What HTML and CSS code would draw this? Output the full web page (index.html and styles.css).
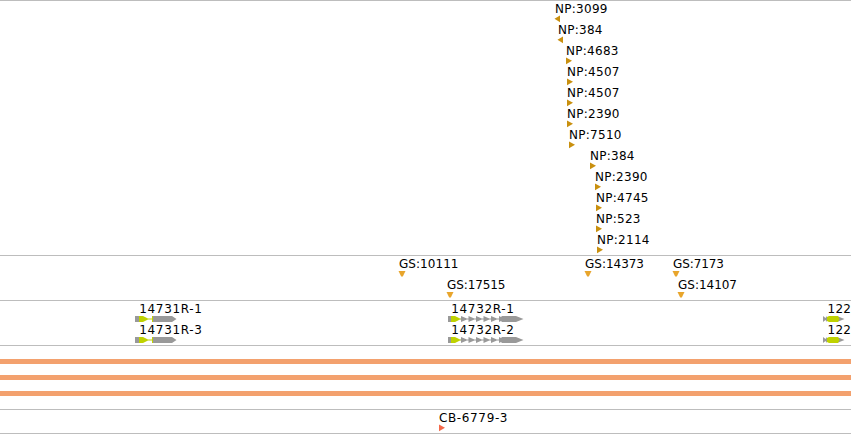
FILE: index.html
```
<!DOCTYPE html>
<html lang="en">
<head>
<meta charset="utf-8">
<title>Genome tracks</title>
<link rel="stylesheet" href="styles.css">
</head>
<body>
<main class="browser" id="browser"></main>
<script src="tracks.js"></script>
</body>
</html>
```
FILE: styles.css
```
body {
  margin: 0;
  background: #fff;
}
.browser {
  display: flex;
  flex-direction: column;
  width: 851px;
  height: 434px;
  overflow: hidden;
}
.track {
  box-sizing: border-box;
  border-top: 1px solid #bdbdbd;
}
.track svg {
  display: block;
}
.track-end {
  border-top: 1px solid #bdbdbd;
}
.label {
  font: 12px "DejaVu Sans", sans-serif;
  fill: #000;
}
.np { fill: #c9900f; }
.gs { fill: #e8a52c; }
.cb { fill: #f4694a; }
.exon { fill: #999; }
.coding { fill: #bfd200; }
.bars {
  display: flex;
  flex-direction: column;
  gap: 11px;
  height: 64px;
  padding-top: 13px;
}
.bar {
  height: 5px;
  background: #f3a16e;
}
```
FILE: tracks.js
```
const browser = document.getElementById("browser");

// Coordinates are local to each track; width fixes the drawn length of a label.
const label = (x, y, text, width) =>
  `<text class="label" x="${x}" y="${y}"${width ? ` textLength="${width}"` : ""}>${text}</text>`;
const right = (x, y, cls) => `<path class="${cls}" d="M${x} ${y - 0.5}l6 3.2-6 3.6z"/>`;
const left = (x, y, cls) => `<path class="${cls}" d="M${x + 5} ${y - 0.5}v6.7l-5.5-3.5z"/>`;
const down = (x, y, cls) => `<path class="${cls}" d="M${x - 0.5} ${y}h7l-2.7 5.5h-1.6z"/>`;

function track(height, content) {
  browser.insertAdjacentHTML("beforeend",
    `<section class="track"><svg width="851" height="${height - 1}">${content}</svg></section>`);
}

const np = [
  [555, "3099"], [558, "384"], [566, "4683"], [567, "4507"], [567, "4507"], [567, "2390"],
  [569, "7510"], [590, "384"], [595, "2390"], [596, "4745"], [596, "523"], [597, "2114"]
];
track(255, np.map(([x, id], i) =>
  label(x, 12 + i * 21, "NP:" + id, id.length === 4 ? 52.5 : 44.5) +
  (i < 2 ? left : right)(x, 15 + i * 21, "np")).join(""));

const gs = [[399, 0, "10111", 59.5], [447, 1, "17515", 58.5], [585, 0, "14373", 59],
  [673, 0, "7173", 51], [678, 1, "14107", 59]];
track(45, gs.map(([x, row, id, w]) =>
  label(x, 12 + row * 21, "GS:" + id, w) + down(x, 15 + row * 21, "gs")).join(""));

const geneA = `<path class="exon" d="M135 0h4v6h-4zM152 0h20l4.5 3-4.5 3h-20z"/>
  <path class="coding" d="M139 0h4l5 2.5h4V0h1v6h-1V3.5h-4L143 6h-4z"/>`;
const geneB = `<path class="exon" d="M448 0h3v6h-3zM460 2.5h40v1h-40zM461 0l7 3-7 3zM468.5 0l7 3-7 3zM476 0l7 3-7 3zM483.5 0l7 3-7 3zM491 0l7 3-7 3zM499 0l2 1 1-1h14l7.5 3-7.5 3h-14l-1-1-2 1z"/>
  <path class="coding" d="M451 0h4l6 3-6 3h-4z"/>`;
const geneC = `<path class="exon" d="M823 0l2.5 2L827 0v6l-1.5-2L823 6zM837 0l7.5 3-7.5 3z"/>
  <path class="coding" d="M827 1l2-1h9l1.5 3-1.5 3h-9l-2-1z"/>`;
track(45, [0, 1].map(row =>
  label(139.3, 12 + row * 21, "14731R-" + (row ? 3 : 1), 62.5) +
  label(451.3, 12 + row * 21, "14732R-" + (row + 1), 62.5) +
  label(827.5, 12 + row * 21, "122", 23.5) +
  `<g transform="translate(0 ${15 + row * 21})">${geneA}${geneB}${geneC}</g>`).join(""));

browser.insertAdjacentHTML("beforeend",
  `<section class="track bars"><div class="bar"></div><div class="bar"></div><div class="bar"></div></section>`);

track(24, label(439, 12, "CB-6779-3", 68.5) + right(439, 15, "cb"));
browser.insertAdjacentHTML("beforeend", `<div class="track-end"></div>`);
```
